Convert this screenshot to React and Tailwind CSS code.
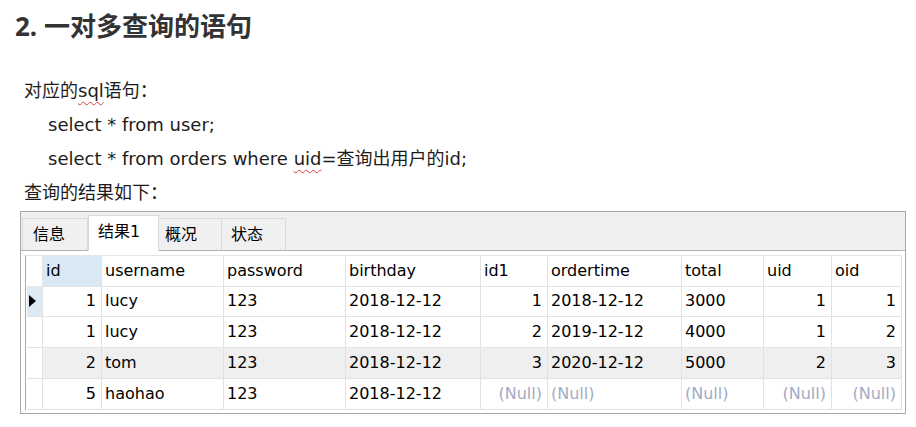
import React from "react";

const cols = "grid grid-cols-[16px_59px_122px_122px_135px_67px_134px_82px_68px_70px]";

const headers = ["id", "username", "password", "birthday", "id1", "ordertime", "total", "uid", "oid"];

// r = right aligned, n = (Null)
const rows = [
    { cur: true, cells: [["1", "r"], ["lucy"], ["123"], ["2018-12-12"], ["1", "r"], ["2018-12-12"], ["3000"], ["1", "r"], ["1", "r"]] },
    { cells: [["1", "r"], ["lucy"], ["123"], ["2018-12-12"], ["2", "r"], ["2019-12-12"], ["4000"], ["1", "r"], ["2", "r"]] },
    { gray: true, cells: [["2", "r"], ["tom"], ["123"], ["2018-12-12"], ["3", "r"], ["2020-12-12"], ["5000"], ["2", "r"], ["3", "r"]] },
    { cells: [["5", "r"], ["haohao"], ["123"], ["2018-12-12"], ["(Null)", "rn"], ["(Null)", "n"], ["(Null)", "n"], ["(Null)", "rn"], ["(Null)", "rn"]] },
];

function Wavy({ children }) {
    return (
        <span className="underline decoration-wavy decoration-[#e03a3a] decoration-1 underline-offset-[4px]">
            {children}
        </span>
    );
}

export default function App() {
    return (
        <div className="w-[916px] h-[427px] bg-white overflow-hidden">
            {/* heading */}
            <h2 className="pt-[8px] pl-[15px] text-[26px] leading-[36px] font-bold text-[#333333] font-['Noto_Sans','Noto_Sans_CJK_SC',sans-serif]">
                2. 一对多查询的语句
            </h2>

            {/* body text */}
            <div className="mt-[30px] text-[18px] leading-[34px] text-[#1c1c1c] font-['DejaVu_Sans','Noto_Sans_CJK_SC',sans-serif]">
                <p className="pl-[24px]">对应的<Wavy>sql</Wavy>语句：</p>
                <p className="pl-[48px]">select * from user;</p>
                <p className="pl-[48px]">select * from orders where <Wavy>uid</Wavy>=查询出用户的id;</p>
                <p className="pl-[24px]">查询的结果如下：</p>
            </div>

            {/* result panel */}
            <div className="ml-[20px] mt-[1px] w-[886px] h-[203px] border border-[#a8a8a8] font-['DejaVu_Sans','Noto_Sans_CJK_SC',sans-serif] text-[16px] text-black">
                <div className="h-[39px] bg-[#f0f0f0] border-b border-[#b4b4b4] flex items-end pl-[1px]">
                    <div className="h-[32px] w-[66px] border border-b-0 border-[#d9d9d9] pl-[10px] leading-[32px]">信息</div>
                    <div className="h-[36px] w-[71px] bg-white border border-b-0 border-[#d9d9d9] pl-[9px] leading-[32px] -mb-[1px] relative">结果1</div>
                    <div className="h-[32px] w-[63px] border border-b-0 border-l-0 border-[#d9d9d9] pl-[6px] leading-[32px]">概况</div>
                    <div className="h-[32px] w-[64px] border border-b-0 border-l-0 border-[#d9d9d9] pl-[9px] leading-[32px]">状态</div>
                </div>

                <div className="pl-[4px] pt-[4px]">
                    <div className="border-l border-[#a8a8a8] pl-[1px] w-fit">
                        {/* header */}
                        <div className={`${cols} h-[31px] border-t border-[#e6e6e6]`}>
                            <div className="border-r border-b border-[#e2e2e2]" />
                            {headers.map((h, i) => (
                                <div
                                    key={h}
                                    className={`border-r border-b border-[#e2e2e2] pl-[3px] leading-[30px] ${i === 0 ? "bg-[#d9e8f5]" : ""}`}
                                >
                                    {h}
                                </div>
                            ))}
                        </div>

                        {rows.map((row, ri) => (
                            <div key={ri} className={`${cols} h-[31px]`}>
                                <div className={`border-r border-b border-[#e2e2e2] flex items-center pl-[2px] ${row.cur ? "bg-[#dde9f5]" : ""}`}>
                                    {row.cur && (
                                        <svg width="7" height="12" viewBox="0 0 7 12">
                                            <path d="M0 0 L7 6 L0 12 Z" fill="#000" />
                                        </svg>
                                    )}
                                </div>
                                {row.cells.map(([v, f = ""], ci) => (
                                    <div
                                        key={ci}
                                        className={`border-r border-b border-[#e2e2e2] leading-[30px] whitespace-nowrap ${
                                            f.includes("r") ? "text-right pr-[5px]" : "pl-[3px]"
                                        } ${f.includes("n") ? "text-[#a3abc6]" : ""} ${row.gray ? "bg-[#efefef]" : ""}`}
                                    >
                                        {v}
                                    </div>
                                ))}
                            </div>
                        ))}
                    </div>
                </div>
            </div>
        </div>
    );
}
